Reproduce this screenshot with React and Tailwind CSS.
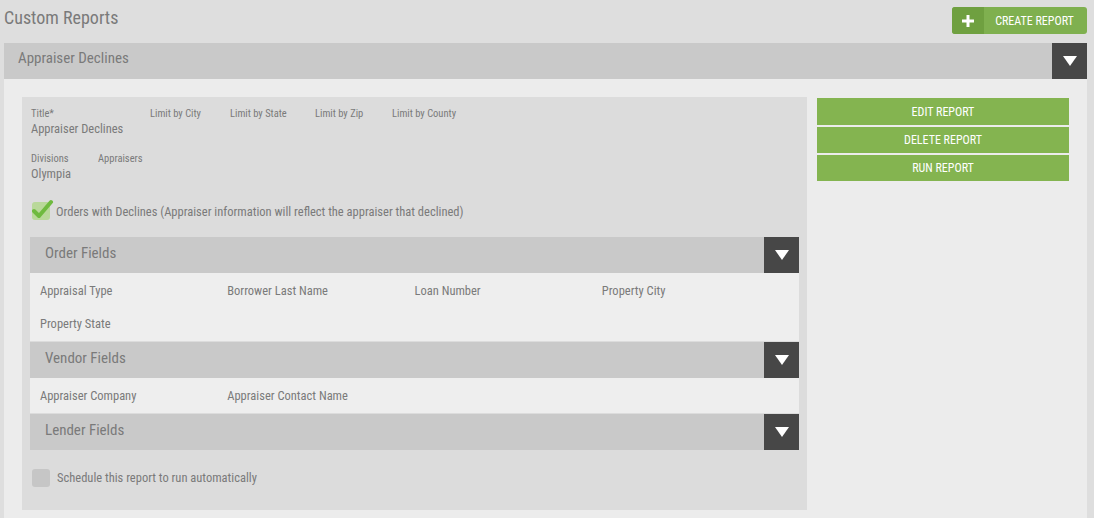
const font = { fontFamily: "'Roboto Condensed', 'Liberation Sans Narrow', Roboto, sans-serif" };

function Caret() {
  return (
    <div className="flex h-9 w-[35px] items-center justify-center bg-[#474747]">
      <svg width="14" height="10" viewBox="0 0 14 10">
        <path d="M0 0 H14 L7 10 Z" fill="#fff" />
      </svg>
    </div>
  );
}

function SectionHeader({ title }) {
  return (
    <div className="flex h-9 items-center justify-between bg-[#c9c9c9]">
      <span className="pb-[4px] pl-[15px] text-[15px] text-[#7a7a7a]">{title}</span>
      <Caret />
    </div>
  );
}

function Fields({ items }) {
  return (
    <div className="grid grid-cols-4 gap-y-[14px] bg-[#eeeeee] px-[10px] py-[8px] text-[12.5px] text-[#7a7a7a]">
      {items.map((f) => (
        <div key={f} className="leading-[19px]">{f}</div>
      ))}
    </div>
  );
}

function Label({ label, value, className = "" }) {
  return (
    <div className={className}>
      <div className="text-[10.5px] leading-[12px] text-[#7a7a7a]">{label}</div>
      {value && <div className="text-[12.5px] leading-[17px] text-[#7a7a7a]">{value}</div>}
    </div>
  );
}

export default function App() {
  return (
    <div className="h-[518px] w-[1094px] overflow-hidden bg-[#dedede]" style={font}>
      <div className="flex items-start justify-between pl-1 pr-[7px] pt-[7px]">
        <h1 className="mt-0 text-[18px] leading-[22px] text-[#7a7a7a]">Custom Reports</h1>
        <button className="flex h-[27px] w-[135px] overflow-hidden rounded-[3px] bg-[#7fb04f] text-white">
          <span className="flex h-full w-8 items-center justify-center bg-[#6fa040]">
            <svg width="12" height="12" viewBox="0 0 12 12">
              <path d="M4.5 0h3v4.5H12v3H7.5V12h-3V7.5H0v-3h4.5z" fill="#fff" />
            </svg>
          </span>
          <span className="flex flex-1 items-center justify-center pr-[2px] text-[12px]">CREATE REPORT</span>
        </button>
      </div>

      <div className="mx-1 mr-[7px] mt-[9px]">
        <div className="flex h-9 items-center justify-between bg-[#c9c9c9]">
          <span className="pb-[5px] pl-[14px] text-[15px] text-[#7a7a7a]">Appraiser Declines</span>
          <Caret />
        </div>
        <div className="flex gap-[10px] bg-[#ececec] pb-[8px] pl-[18px] pr-[18px] pt-[18px]">
          <div className="w-[785px] bg-[#dcdcdc] px-2 pb-[23px] pt-[11px]">
            <div className="flex pl-[1px]">
              <Label label="Title*" value="Appraiser Declines" className="w-[119px]" />
              <Label label="Limit by City" className="w-[80px]" />
              <Label label="Limit by State" className="w-[85px]" />
              <Label label="Limit by Zip" className="w-[77px]" />
              <Label label="Limit by County" />
            </div>
            <div className="mt-[16px] flex pl-[1px]">
              <Label label="Divisions" value="Olympia" className="w-[67px]" />
              <Label label="Appraisers" />
            </div>
            <div className="mt-[18px] flex items-center gap-[6px] pl-[2px]">
              <span className="relative h-[18px] w-[18px] rounded-[3px] bg-[#b9d89a]">
                <svg className="absolute -top-[3px] left-0" width="22" height="21" viewBox="0 0 22 21">
                  <path d="M2 12 L7 17 L19 3" fill="none" stroke="#6fba3f" strokeWidth="4" strokeLinecap="round" strokeLinejoin="round" />
                </svg>
              </span>
              <span className="pt-[3px] text-[12.5px] leading-[18px] text-[#7a7a7a]">
                Orders with Declines (Appraiser information will reflect the appraiser that declined)
              </span>
            </div>

            <div className="mt-[16px] flex flex-col">
              <SectionHeader title="Order Fields" />
              <Fields items={["Appraisal Type", "Borrower Last Name", "Loan Number", "Property City", "Property State"]} />
              <div className="mt-px">
                <SectionHeader title="Vendor Fields" />
              </div>
              <Fields items={["Appraiser Company", "Appraiser Contact Name"]} />
              <div className="mt-px">
                <SectionHeader title="Lender Fields" />
              </div>
            </div>

            <div className="mt-[19px] flex items-center gap-[7px] pl-[2px]">
              <span className="h-[18px] w-[18px] rounded-[3px] bg-[#c6c6c6]" />
              <span className="text-[12.5px] leading-[18px] text-[#7a7a7a]">Schedule this report to run automatically</span>
            </div>
          </div>

          <div className="flex w-[252px] flex-col gap-[2px] pt-px">
            <button className="flex h-[27px] items-center justify-center bg-[#84b450] text-[12px] text-white">EDIT REPORT</button>
            <button className="flex h-[26px] items-center justify-center bg-[#84b450] text-[12px] text-white">DELETE REPORT</button>
            <button className="flex h-[26px] items-center justify-center bg-[#84b450] text-[12px] text-white">RUN REPORT</button>
          </div>
        </div>
      </div>
    </div>
  );
}
